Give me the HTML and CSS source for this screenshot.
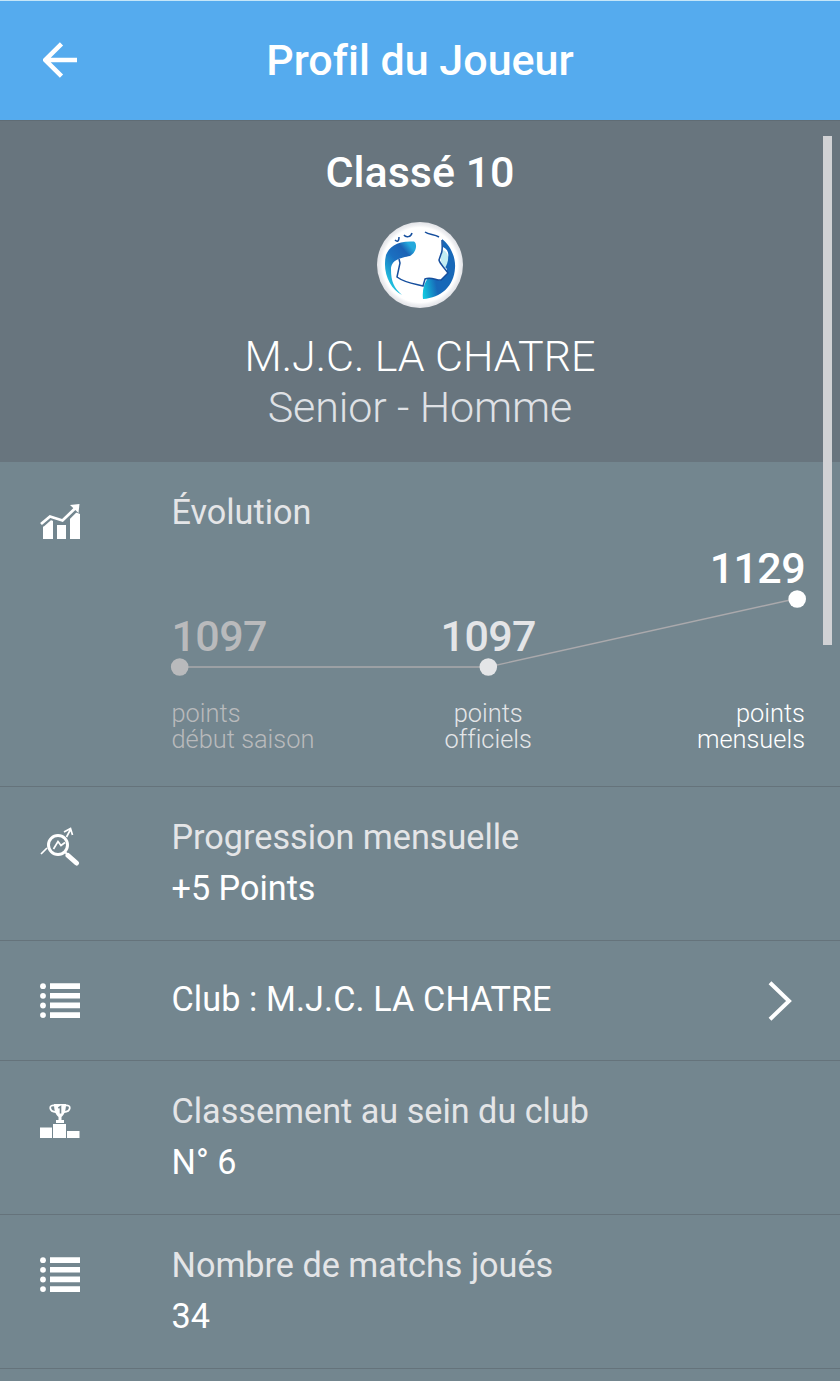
FILE: index.html
```html
<!DOCTYPE html>
<html lang="fr">
	<head>
		<meta charset="UTF-8">
		<title>Profil du Joueur</title>
		<link rel="stylesheet" href="styles.css">
	</head>
	<body>
		<div class="header">
			<svg class="back" viewBox="0 0 36 36">
				<path d="M34 18H3M18.500 1.800L2.300 18L18.500 34.200" />
			</svg>
			<h1>Profil du Joueur</h1>
		</div>
		<div class="hero">
			<h2>Classé 10</h2>
			<svg class="logo" viewBox="0 0 86 86">
				<defs>
					<linearGradient id="left" x1="0" y1="1" x2="0.7" y2="0">
						<stop offset="0.2" stop-color="#20c5e0" />
						<stop offset="0.6" stop-color="#1b6fc0" />
						<stop offset="0.85" stop-color="#1b62b5" />
						<stop offset="1" stop-color="#25a9dc" />
					</linearGradient>
					<linearGradient id="right" x1="0" y1="0.8" x2="0.6" y2="0.6">
						<stop offset="0" stop-color="#12c4de" />
						<stop offset="0.65" stop-color="#1768b8" />
					</linearGradient>
					<radialGradient id="rim">
						<stop offset="0.87" stop-color="#fff" />
						<stop offset="0.93" stop-color="#eeeff2" />
						<stop offset="1" stop-color="#e2e3e7" />
					</radialGradient>
				</defs>
				<circle cx="43" cy="43" r="43" fill="url(#rim)" />
				<path d="M9 33C12 25 20 18.500 37 19.500C41 22 39 31 33 34C24 36 14 37 14 48C14 59 17 66 25 73C13 67 5 50 9 33Z" fill="url(#left)" />
				<path d="M65 17C73 23 79 35 78 46C77 64 64 76 46 77C45 69 47 61 51 56C57 58 63 58 69 50L70 47L67 44C73 36 73 28 66 25Z" fill="url(#right)" />
				<path d="M66 28C63 34 62 39 68 46C72 39 73 31 66 28Z" fill="#c3edf3" />
				<path d="M64 32C62 37 61 39 66 44L71 51L64 58C60 59 54 54 48 57L53 50L60 36Z" fill="#fff" />
				<path class="land" d="M22 37L23 41L20 55C28 61 38 62 46 64L48 57C54 54 60 59 64 58L71 51C66 44 63 42 62 38L64 32C66 29 65 24 65 18M48 10C52 13 57 12 62 15M18 18C20 20 22 20 22 15M27 13C29 16 34 15 35 11" />
			</svg>
			<div class="club">M.J.C. LA CHATRE</div>
			<div class="category">Senior - Homme</div>
		</div>
		<div class="row evolution">
			<svg class="icon" viewBox="0 0 40 40">
				<path d="M3 22L9 17L13 18V37H3ZM17 23H26V37H17ZM30 15L35 10L40 12V37H30Z" />
				<path class="cut" d="M2 23L10.500 15.500L23.500 20L37 6.500" />
				<path class="line" d="M1 22L10 14.500L22.500 18.500L36 5.500" />
				<path d="M30 3L39.500 2L38.500 11Z" />
			</svg>
			<div class="info">
				<div class="label">Évolution</div>
				<div class="chart">
					<svg class="curve" viewBox="0 0 634 90">
						<path d="M8 79H316L625 10.500" />
						<circle class="start" cx="7.700" cy="79" r="8.800" />
						<circle class="official" cx="316.300" cy="79" r="8.800" />
						<circle class="monthly" cx="625.200" cy="11" r="8.800" />
					</svg>
					<div class="point start">
						<div class="value">1097</div>
						<div class="legend">points<br>début saison</div>
					</div>
					<div class="point official">
						<div class="value">1097</div>
						<div class="legend">points<br>officiels</div>
					</div>
					<div class="point monthly">
						<div class="value">1129</div>
						<div class="legend">points<br>mensuels</div>
					</div>
				</div>
			</div>
		</div>
		<div class="row">
			<svg class="icon" viewBox="0 0 40 40">
				<circle class="lens" cx="18" cy="18" r="9.500" />
				<path class="handle" d="M28 28.500L36.500 36" />
				<path class="lens-edge" d="M24 24L28 28" />
				<path class="trend" d="M1 27L7 21M13.500 22L18 14.500L21 18.500L25 15.500M26.500 10L30.500 2.500M24 5L30.500 1.500L32.500 8" />
			</svg>
			<div class="info">
				<div class="label">Progression mensuelle</div>
				<div class="text">+5 Points</div>
			</div>
		</div>
		<div class="row link">
			<svg class="icon" viewBox="0 0 40 40">
				<path d="M10 3.200H40V9H10ZM10 12.900H40V18.500H10ZM10 22.600H40V28.200H10ZM10 32.200H40V38H10Z" />
				<circle cx="3" cy="6.200" r="2.900" />
				<circle cx="3" cy="15.800" r="2.900" />
				<circle cx="3" cy="25.500" r="2.900" />
				<circle cx="3" cy="35.100" r="2.900" />
			</svg>
			<div class="info">
				<div class="text">Club : M.J.C. LA CHATRE</div>
			</div>
			<svg class="chevron" viewBox="0 0 24 40">
				<path d="M2 1.800L21 20L2 38.200" />
			</svg>
		</div>
		<div class="row">
			<svg class="icon" viewBox="0 0 40 40">
				<path d="M0 26.500H12V37H0ZM13 23H26V37H13ZM27 30H39.500V37H27ZM16 22V19H18.500V16C15 13 14 8 14 3H26C26 8 25 13 21.500 16V19H24V22Z" />
				<path class="ears" d="M15 4.500C8 3 9 11 16 11M25 4.500C32 3 31 11 24 11" />
				<path class="one" d="M18.300 7L20.500 5.700V12.500" />
			</svg>
			<div class="info">
				<div class="label">Classement au sein du club</div>
				<div class="text">N° 6</div>
			</div>
		</div>
		<div class="row">
			<svg class="icon" viewBox="0 0 40 40">
				<path d="M10 2.200H40V8H10ZM10 11.900H40V17.500H10ZM10 21.600H40V27.200H10ZM10 31.200H40V37H10Z" />
				<circle cx="3" cy="5.200" r="2.900" />
				<circle cx="3" cy="14.800" r="2.900" />
				<circle cx="3" cy="24.500" r="2.900" />
				<circle cx="3" cy="34.100" r="2.900" />
			</svg>
			<div class="info">
				<div class="label">Nombre de matchs joués</div>
				<div class="text">34</div>
			</div>
		</div>
		<div class="scrollbar"></div>
	</body>
</html>
```

FILE: styles.css
```css
*{
	margin: 0;
	padding: 0;
	box-sizing: border-box;
}
html{
	overflow: hidden;
}
body{
	height: 1381px;
	position: relative;
	overflow: hidden;
	background: #73868f;
	color: white;
	font-family: Roboto, sans-serif;
	font-variant-ligatures: none;
}
svg{
	display: block;
	flex: none;
}
.header{
	height: 120px;
	padding: 0 42px 2px 43px;
	display: grid;
	grid-template-columns: 36px 1fr 37px;
	align-items: center;
	background: #55abee;
	border-top: solid 1px #c5e6f8;
}
.header h1{
	font-size: 43px;
	line-height: 50px;
	font-weight: 500;
	text-align: center;
}
.back{
	width: 36px;
	height: 36px;
	fill: none;
	stroke: white;
	stroke-width: 4.5;
}
.hero{
	height: 342px;
	padding-top: 26px;
	background: #68757e;
	border-top: solid 1px #5f6c75;
	text-align: center;
	font-size: 43px;
	line-height: 51px;
	font-weight: 300;
}
.hero h2{
	font-size: 43px;
	font-weight: 500;
}
.logo{
	width: 86px;
	height: 86px;
	margin: 24px auto 23px;
}
.land{
	fill: none;
	stroke: #164f9e;
	stroke-width: 1.5;
}
.category{
	color: #dfe1e5;
	letter-spacing: -0.1px;
}
.row{
	height: 154px;
	padding: 25px 35px 0 40px;
	display: flex;
	border-bottom: solid 1px #65737b;
}
.evolution{
	height: 325px;
}
.icon{
	width: 40px;
	height: 40px;
	margin: 15px 91.5px 0 0;
	fill: white;
}
.info{
	flex: 1;
	font-size: 34.2px;
	line-height: 51.4px;
}
.label{
	color: #e4e5e7;
}
.link{
	height: 120px;
	padding-top: 0;
	padding-bottom: 2px;
	align-items: center;
}
.link .icon{
	margin-top: 0;
}
.link .text{
	letter-spacing: 0.1px;
}
.chevron{
	width: 24px;
	height: 40px;
	margin: 2px 13px 0 0;
	fill: none;
	stroke: white;
	stroke-width: 4;
}
.chart{
	height: 224px;
	position: relative;
	display: grid;
	grid-template-columns: 1fr 1fr 1fr;
}
/* the curve runs behind the three values */
.curve{
	width: 634px;
	height: 90px;
	position: absolute;
	top: 50px;
	left: 0;
	overflow: visible;
}
.curve path{
	fill: none;
	stroke: #aaa9ac;
	stroke-width: 1.4;
}
.point{
	position: relative;
	display: flex;
	flex-direction: column;
}
.value{
	height: 163px;
	padding-top: 73px;
	font-size: 43px;
	line-height: 50px;
	font-weight: 500;
	letter-spacing: -0.6px;
}
.legend{
	font-size: 25.4px;
	line-height: 25.7px;
	font-weight: 300;
}
.start{
	color: #b9babc;
	fill: #b9babc;
}
.official{
	color: #e4e5e7;
	fill: #e4e5e7;
	text-align: center;
}
.monthly{
	fill: white;
	text-align: right;
}
.monthly .value{
	padding-top: 5px;
}
.line,.cut,.lens,.lens-edge,.handle,.trend,.ears,.one{
	fill: none;
	stroke: white;
}
.line{
	stroke-width: 2.8;
}
.cut{
	stroke: #73868f;
	stroke-width: 4.6;
}
.lens{
	stroke-width: 3;
}
.lens-edge{
	stroke-width: 2;
}
.handle{
	stroke-width: 5;
	stroke-linecap: round;
}
.trend{
	stroke-width: 1.7;
}
.ears{
	stroke-width: 1.8;
}
.one{
	stroke: #73868f;
	stroke-width: 1.6;
}
.scrollbar{
	width: 9px;
	height: 509px;
	position: absolute;
	top: 136px;
	right: 8px;
	background: #d1d2d5;
}
```
